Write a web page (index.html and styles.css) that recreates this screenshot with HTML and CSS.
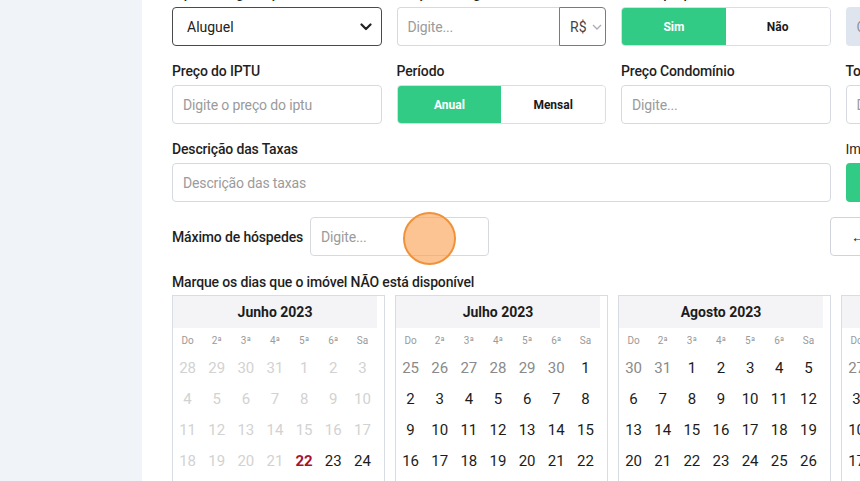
FILE: index.html
```html
<!DOCTYPE html>
<html lang="pt-BR">
<head>
<meta charset="utf-8">
<title>Cadastro de imóvel</title>
<link rel="stylesheet" href="styles.css">
</head>
<body>
<div class="page">
  <aside class="sidebar"></aside>
  <main class="main">
    <div class="form-grid">
      <div class="field">
        <label class="label">Tipo de negociação</label>
        <div class="select">
          <span>Aluguel</span>
          <svg class="chev" width="12" height="8" viewBox="0 0 12 8"><path d="M1.5 1.5 L6 6 L10.5 1.5" fill="none" stroke="#222" stroke-width="2.2" stroke-linecap="round" stroke-linejoin="round"/></svg>
        </div>
      </div>
      <div class="field">
        <label class="label">Preço do aluguel</label>
        <div class="money">
          <div class="input money-input">Digite...</div>
          <div class="currency"><span>R$</span><svg width="10" height="6" viewBox="0 0 10 6"><path d="M1 1 L5 5 L9 1" fill="none" stroke="#aab" stroke-width="1.3"/></svg></div>
        </div>
      </div>
      <div class="field">
        <label class="label">Aceita proposta?</label>
        <div class="toggle"><span class="opt on">Sim</span><span class="opt">Não</span></div>
      </div>
      <div class="field">
        <label class="label">Cobrança</label>
        <div class="muted-box">Calcular</div>
      </div>

      <div class="field">
        <label class="label">Preço do IPTU</label>
        <div class="input">Digite o preço do iptu</div>
      </div>
      <div class="field">
        <label class="label">Período</label>
        <div class="toggle"><span class="opt on">Anual</span><span class="opt">Mensal</span></div>
      </div>
      <div class="field">
        <label class="label">Preço Condomínio</label>
        <div class="input">Digite...</div>
      </div>
      <div class="field">
        <label class="label">Total</label>
        <div class="input">Digite...</div>
      </div>

      <div class="field span3">
        <label class="label">Descrição das Taxas</label>
        <div class="input">Descrição das taxas</div>
      </div>
      <div class="field">
        <label class="label alt">Imagens</label>
        <div class="green-btn">Adicionar</div>
      </div>
    </div>

    <div class="guest-row">
      <div class="guests">
        <span class="label inline">Máximo de hóspedes</span>
        <div class="input guest-input">Digite...</div>
        <span class="click-dot"></span>
      </div>
      <div class="nav-btn">← Voltar</div>
    </div>

    <p class="note">Marque os dias que o imóvel NÃO está disponível</p>

    <div class="calendars">
      <div class="cal">
        <div class="cal-title">Junho 2023</div>
        <div class="cal-grid">
          <span class="dow">Do</span><span class="dow">2ª</span><span class="dow">3ª</span><span class="dow">4ª</span><span class="dow">5ª</span><span class="dow">6ª</span><span class="dow">Sa</span>
          <span class="d off">28</span><span class="d off">29</span><span class="d off">30</span><span class="d off">31</span><span class="d off">1</span><span class="d off">2</span><span class="d off">3</span>
          <span class="d off">4</span><span class="d off">5</span><span class="d off">6</span><span class="d off">7</span><span class="d off">8</span><span class="d off">9</span><span class="d off">10</span>
          <span class="d off">11</span><span class="d off">12</span><span class="d off">13</span><span class="d off">14</span><span class="d off">15</span><span class="d off">16</span><span class="d off">17</span>
          <span class="d off">18</span><span class="d off">19</span><span class="d off">20</span><span class="d off">21</span><span class="d today">22</span><span class="d">23</span><span class="d">24</span>
          <span class="d">25</span><span class="d">26</span><span class="d">27</span><span class="d">28</span><span class="d">29</span><span class="d">30</span><span class="d other">1</span>
        </div>
      </div>
      <div class="cal">
        <div class="cal-title">Julho 2023</div>
        <div class="cal-grid">
          <span class="dow">Do</span><span class="dow">2ª</span><span class="dow">3ª</span><span class="dow">4ª</span><span class="dow">5ª</span><span class="dow">6ª</span><span class="dow">Sa</span>
          <span class="d other">25</span><span class="d other">26</span><span class="d other">27</span><span class="d other">28</span><span class="d other">29</span><span class="d other">30</span><span class="d">1</span>
          <span class="d">2</span><span class="d">3</span><span class="d">4</span><span class="d">5</span><span class="d">6</span><span class="d">7</span><span class="d">8</span>
          <span class="d">9</span><span class="d">10</span><span class="d">11</span><span class="d">12</span><span class="d">13</span><span class="d">14</span><span class="d">15</span>
          <span class="d">16</span><span class="d">17</span><span class="d">18</span><span class="d">19</span><span class="d">20</span><span class="d">21</span><span class="d">22</span>
          <span class="d">23</span><span class="d">24</span><span class="d">25</span><span class="d">26</span><span class="d">27</span><span class="d">28</span><span class="d">29</span>
        </div>
      </div>
      <div class="cal">
        <div class="cal-title">Agosto 2023</div>
        <div class="cal-grid">
          <span class="dow">Do</span><span class="dow">2ª</span><span class="dow">3ª</span><span class="dow">4ª</span><span class="dow">5ª</span><span class="dow">6ª</span><span class="dow">Sa</span>
          <span class="d other">30</span><span class="d other">31</span><span class="d">1</span><span class="d">2</span><span class="d">3</span><span class="d">4</span><span class="d">5</span>
          <span class="d">6</span><span class="d">7</span><span class="d">8</span><span class="d">9</span><span class="d">10</span><span class="d">11</span><span class="d">12</span>
          <span class="d">13</span><span class="d">14</span><span class="d">15</span><span class="d">16</span><span class="d">17</span><span class="d">18</span><span class="d">19</span>
          <span class="d">20</span><span class="d">21</span><span class="d">22</span><span class="d">23</span><span class="d">24</span><span class="d">25</span><span class="d">26</span>
          <span class="d">27</span><span class="d">28</span><span class="d">29</span><span class="d">30</span><span class="d">31</span><span class="d other">1</span><span class="d other">2</span>
        </div>
      </div>
      <div class="cal">
        <div class="cal-title">Setembro 2023</div>
        <div class="cal-grid">
          <span class="dow">Do</span><span class="dow">2ª</span><span class="dow">3ª</span><span class="dow">4ª</span><span class="dow">5ª</span><span class="dow">6ª</span><span class="dow">Sa</span>
          <span class="d other">27</span><span class="d other">28</span><span class="d other">29</span><span class="d other">30</span><span class="d other">31</span><span class="d">1</span><span class="d">2</span>
          <span class="d">3</span><span class="d">4</span><span class="d">5</span><span class="d">6</span><span class="d">7</span><span class="d">8</span><span class="d">9</span>
          <span class="d">10</span><span class="d">11</span><span class="d">12</span><span class="d">13</span><span class="d">14</span><span class="d">15</span><span class="d">16</span>
          <span class="d">17</span><span class="d">18</span><span class="d">19</span><span class="d">20</span><span class="d">21</span><span class="d">22</span><span class="d">23</span>
          <span class="d">24</span><span class="d">25</span><span class="d">26</span><span class="d">27</span><span class="d">28</span><span class="d">29</span><span class="d">30</span>
        </div>
      </div>
    </div>
  </main>
</div>
</body>
</html>
```
FILE: styles.css
```css
* { box-sizing: border-box; }
html, body { margin: 0; padding: 0; }
body {
  width: 860px;
  height: 481px;
  overflow: hidden;
  background: #fff;
  font-family: Roboto, "Liberation Sans", sans-serif;
  color: #1f1f1f;
}
.page { display: flex; align-items: stretch; min-height: 481px; }
.sidebar { flex: 0 0 142px; background: #f0f3f8; }
.main {
  flex: 0 0 914px;
  padding: 0 0 0 30px;
  margin-top: -17px;
}
.form-grid {
  display: grid;
  grid-template-columns: repeat(4, 209.5px);
  column-gap: 15px;
  row-gap: 15px;
}
.field { display: flex; flex-direction: column; }
.span3 { grid-column: span 3; }
.label {
  display: block;
  font-size: 14px;
  font-weight: 500;
  line-height: 20px;
  margin-bottom: 4px;
  color: #1f1f1f;
  letter-spacing: -0.15px;
}
.label.alt { font-family: "Liberation Sans", sans-serif; font-weight: 400; }
.input {
  height: 39px;
  border: 1px solid #d6dae0;
  border-radius: 4px;
  padding: 0 10px;
  display: flex;
  align-items: center;
  font-size: 14px;
  color: #9b9b9b;
  background: #fff;
  letter-spacing: -0.15px;
}
.select {
  height: 39px;
  border: 1px solid #4a4a4a;
  border-radius: 4px;
  padding: 0 9px 0 14px;
  display: flex;
  align-items: center;
  justify-content: space-between;
  font-size: 14px;
  color: #222;
}
.money { display: flex; }
.money-input { flex: 1; border-radius: 4px 0 0 4px; border-right: none; }
.currency {
  width: 47px;
  height: 39px;
  border: 1px solid #7a7a7a;
  border-radius: 0 4px 4px 0;
  display: flex;
  align-items: center;
  gap: 5px;
  padding-left: 10px;
  font-size: 14px;
  color: #444;
}
.toggle {
  height: 39px;
  display: flex;
  border: 1px solid #dadde3;
  border-radius: 4px;
  overflow: hidden;
}
.opt {
  flex: 1;
  display: flex;
  align-items: center;
  justify-content: center;
  font-size: 12px;
  font-weight: 700;
  color: #1a1a1a;
  background: #fff;
}
.opt.on { background: #31cb85; color: #fff; }
.muted-box {
  height: 39px;
  border-radius: 4px;
  background: #dfe5ef;
  display: flex;
  align-items: center;
  padding-left: 11px;
  font-size: 14px;
  color: #8a93a3;
}
.green-btn {
  height: 39px;
  border-radius: 4px;
  background: #31cb85;
  display: flex;
  align-items: center;
  justify-content: center;
  font-size: 13px;
  font-weight: 700;
  color: #fff;
}
.guest-row {
  display: flex;
  align-items: center;
  justify-content: space-between;
  margin-top: 15px;
  width: 884px;
}
.guests { display: flex; align-items: center; position: relative; }
.label.inline { margin: 0 7px 0 0; }
.guest-input { width: 179px; }
.click-dot {
  position: absolute;
  left: 231px;
  top: -5px;
  width: 53px;
  height: 53px;
  border-radius: 50%;
  background: rgba(251, 160, 80, 0.62);
  border: 2px solid #f0923a;
}
.nav-btn {
  width: 226px;
  height: 39px;
  border: 1px solid #cfd4db;
  border-radius: 4px;
  display: flex;
  align-items: center;
  padding-left: 20px;
  font-size: 14px;
  color: #222;
}
.note {
  margin: 17px 0 0;
  font-size: 14px;
  font-weight: 500;
  line-height: 18px;
  color: #1f1f1f;
  letter-spacing: -0.15px;
}
.calendars {
  display: flex;
  gap: 10px;
  margin-top: 4px;
}
.cal {
  flex: 0 0 213px;
  border: 1px solid #d8dde5;
  padding-right: 7px;
  height: 220px;
}
.cal-title {
  height: 32px;
  background: #f4f4f6;
  display: flex;
  align-items: center;
  justify-content: center;
  font-size: 14px;
  font-weight: 700;
  color: #1c1c1c;
}
.cal-grid {
  display: grid;
  grid-template-columns: repeat(7, 1fr);
  grid-auto-rows: 31px;
  grid-template-rows: 24px;
}
.cal-grid span { display: flex; align-items: center; justify-content: center; }
.dow { font-size: 10px; color: #9a9a9a; }
.d { font-size: 15px; color: #1c1c1c; }
.d.off { color: #d2d2d2; }
.d.other { color: #8a8a8a; }
.d.today { color: #a3152e; font-weight: 700; }
```
